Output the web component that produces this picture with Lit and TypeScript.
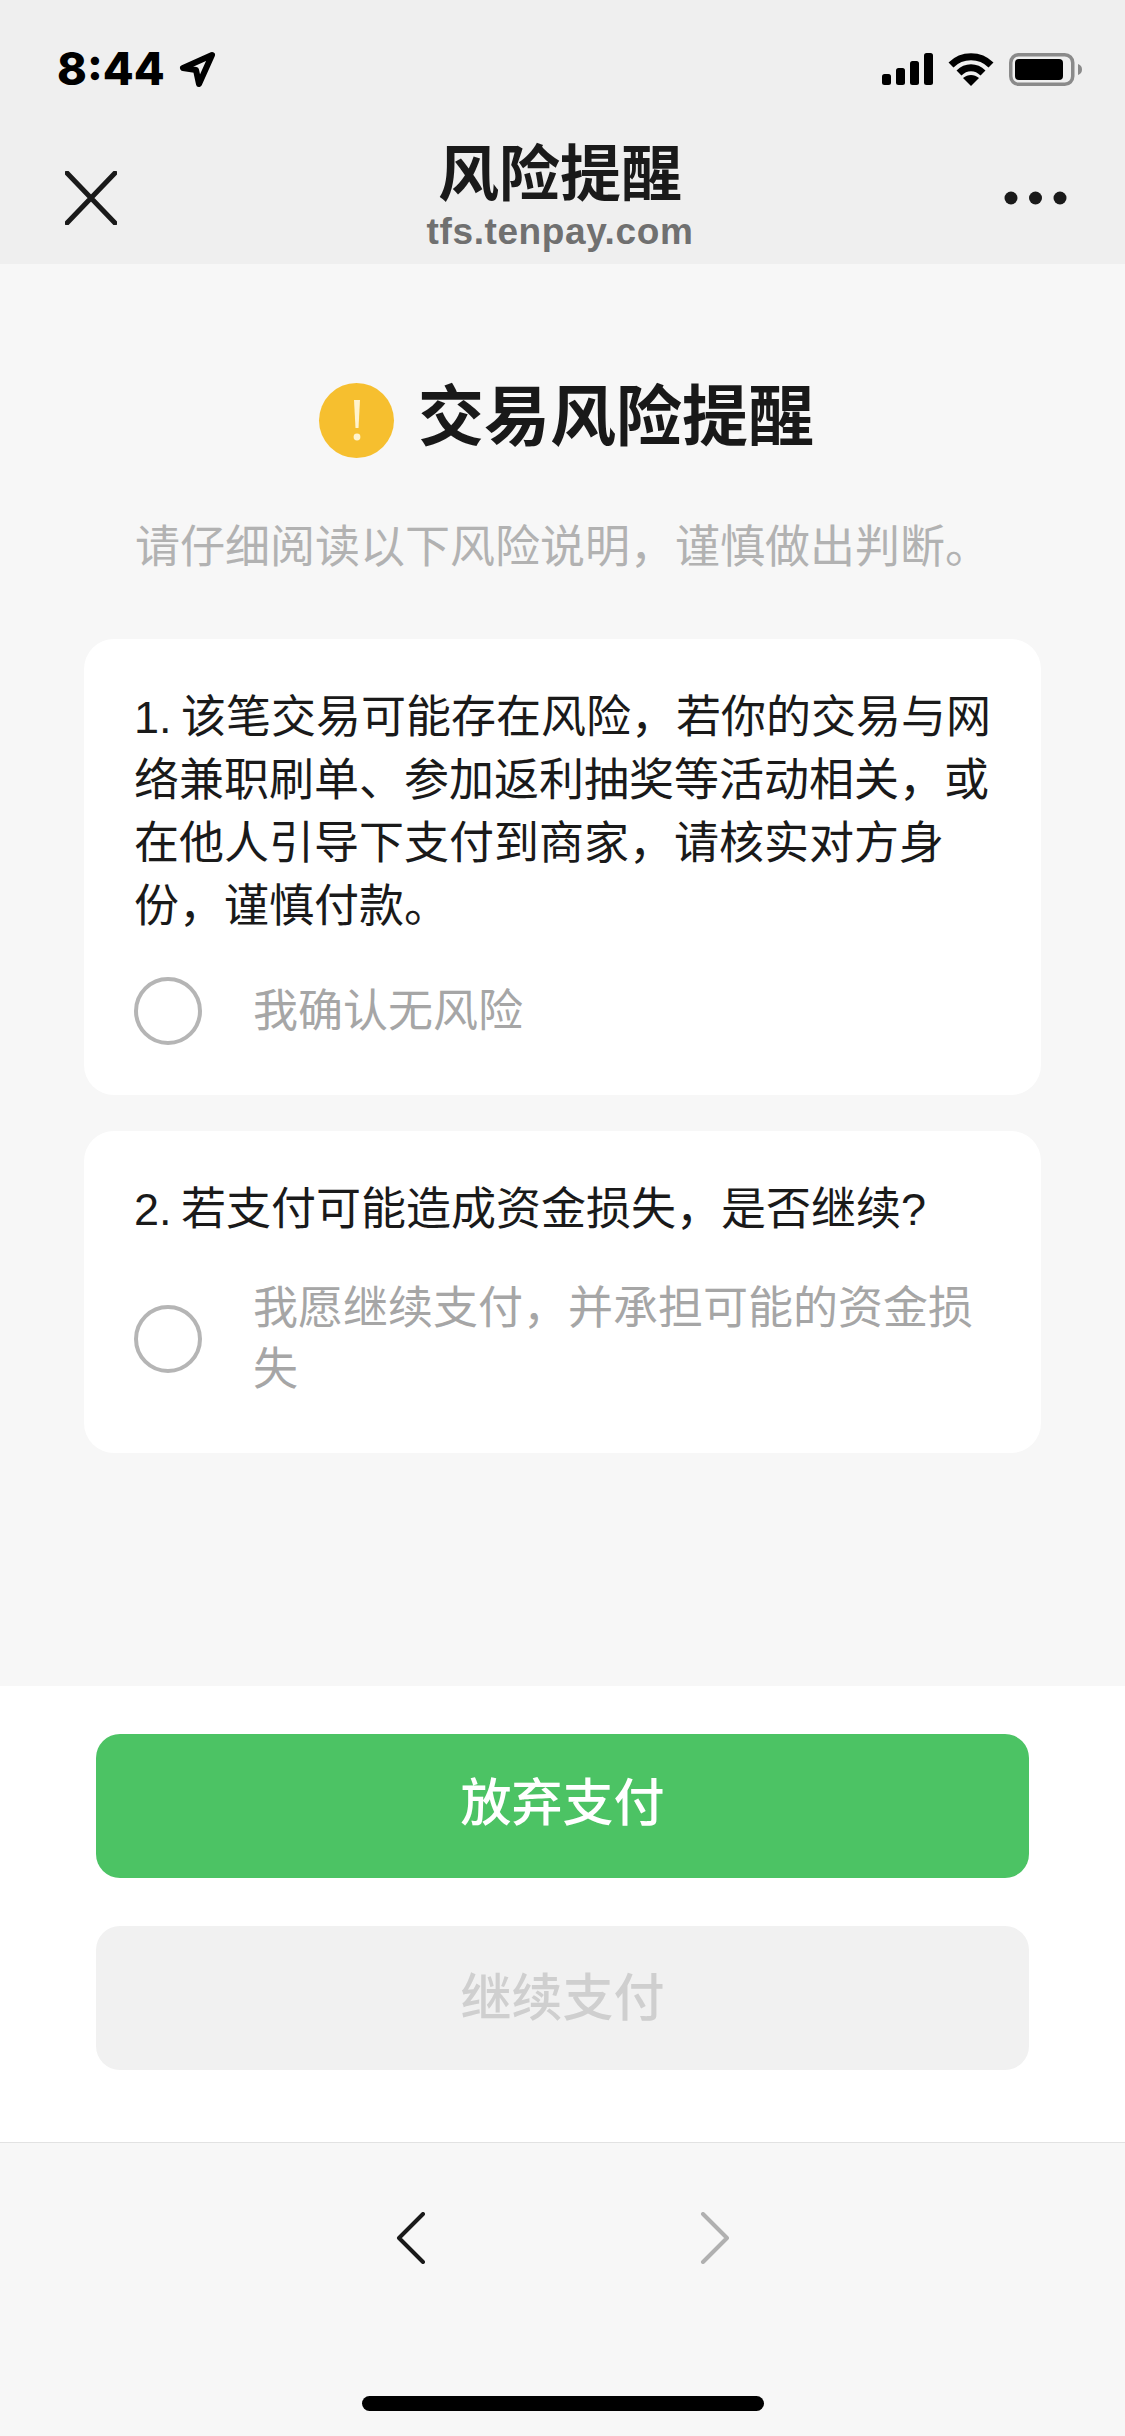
import { LitElement, html, css } from 'lit';
import { customElement } from 'lit/decorators.js';

@customElement('app-root')
export class AppRoot extends LitElement {
  static styles = css`
    :host {
      display: block;
      width: 1125px;
      height: 2436px;
      font-family: "Liberation Sans", "Noto Sans CJK SC", sans-serif;
    }
    .page {
      height: 2436px;
      display: flex;
      flex-direction: column;
      background: #f7f7f7;
    }

    .top {
      height: 264px;
      background: #efefef;
      flex: none;
    }
    .status {
      height: 52px;
      padding: 43px 43px 0 57px;
      display: flex;
      justify-content: space-between;
      align-items: center;
    }
    .time {
      display: flex;
      align-items: center;
      gap: 14px;
      font-family: Inter, "Liberation Sans", sans-serif;
      font-size: 45px;
      line-height: 40px;
      font-weight: 800;
      color: #000;
    }
    .time svg { display: block; }
    .sys { display: flex; align-items: center; gap: 15px; }
    .sys svg { display: block; }
    .nav {
      height: 116px;
      margin-top: 51px;
      padding: 0 58px 0 65px;
      display: grid;
      grid-template-columns: 120px 1fr 120px;
      align-items: start;
    }
    .nav .close { margin-top: 25px; display: block; }
    .nav .more { margin-top: 45px; justify-self: end; display: block; }
    .heading { text-align: center; padding-right: 12px; margin-top: -6px; }
    .heading .name {
      font-size: 61px;
      line-height: 70px;
      font-weight: 700;
      color: #1a1a1a;
    }
    .heading .host {
      margin-top: 2px;
      font-size: 37px;
      line-height: 40px;
      font-weight: 700;
      color: #707070;
      letter-spacing: 0.6px;
    }

    .main {
      flex: 1;
      padding: 0 84px;
    }
    .title {
      margin-top: 114px;
      display: flex;
      justify-content: center;
      align-items: center;
      gap: 24px;
      height: 84px;
      padding-left: 8px;
    }
    .title .badge {
      width: 75px;
      height: 75px;
      border-radius: 50%;
      background: #f6bf2f;
      display: flex;
      align-items: center;
      justify-content: center;
    }
    .title h1 {
      margin: -6px 0 0;
      font-size: 66px;
      line-height: 84px;
      font-weight: 700;
      color: #191919;
    }
    .intro {
      margin: 54px 0 59px;
      text-align: center;
      font-size: 45px;
      line-height: 64px;
      color: #b2b2b2;
    }
    .card {
      background: #fff;
      border-radius: 30px;
      padding: 47px 44px 0 50px;
      box-sizing: border-box;
      height: 456px;
    }
    .card.second { height: 322px; margin-top: 36px; }
    .question {
      margin: 0;
      font-size: 45px;
      line-height: 63px;
      word-spacing: -3px;
      color: #1a1a1a;
    }
    .option {
      display: flex;
      align-items: center;
      gap: 51px;
      margin-top: 39px;
    }
    .second .option { margin-top: 37px; }
    .radio {
      flex: none;
      width: 68px;
      height: 68px;
      box-sizing: border-box;
      border: 4px solid #b5b5b5;
      border-radius: 50%;
    }
    .option span {
      font-size: 45px;
      line-height: 61px;
      color: #a6a6a6;
    }

    .actions {
      flex: none;
      height: 456px;
      box-sizing: border-box;
      background: #fff;
      padding: 48px 96px 0;
      display: flex;
      flex-direction: column;
      gap: 48px;
    }
    .btn {
      height: 144px;
      box-sizing: border-box;
      padding-bottom: 8px;
      border-radius: 24px;
      display: flex;
      align-items: center;
      justify-content: center;
      font-size: 51px;
      font-weight: 500;
    }
    .btn.primary { background: #4cc364; color: #fff; padding-bottom: 14px; }
    .btn.disabled { background: #f1f1f1; color: #cfcfcf; }

    .toolbar {
      flex: none;
      height: 294px;
      box-sizing: border-box;
      border-top: 1px solid #e2e2e2;
      padding-top: 69px;
      display: flex;
      flex-direction: column;
      align-items: center;
    }
    .arrows { display: flex; gap: 274px; }
    .arrows svg { display: block; }
    .home {
      margin-top: 132px;
      width: 402px;
      height: 15px;
      border-radius: 8px;
      background: #000;
    }
  `;

  render() {
    return html`
      <div class="page">
        <div class="top">
          <div class="status">
            <div class="time">
              8:44
              <svg width="38" height="38" viewBox="0 0 38 38" fill="none" stroke="#000" stroke-width="6" stroke-linejoin="round">
                <path d="M33 5 L4 18 L17 20 L20 34 Z" />
              </svg>
            </div>
            <div class="sys">
              <svg width="51" height="32" viewBox="0 0 51 32" fill="#000">
                <rect x="0" y="21" width="9" height="11" rx="2.5" />
                <rect x="14" y="15" width="9" height="17" rx="2.5" />
                <rect x="28" y="8" width="9" height="24" rx="2.5" />
                <rect x="42" y="0" width="9" height="32" rx="2.5" />
              </svg>
              <svg width="46" height="33" viewBox="0 0 46 33" fill="none" stroke="#000" stroke-width="7">
                <path d="M3 12 C14 1 32 1 43 12" />
                <path d="M11 20 C18 13 28 13 35 20" />
                <path d="M23 33 L15 25 C20 21 26 21 31 25 Z" fill="#000" stroke="none" />
              </svg>
              <svg width="73" height="33" viewBox="0 0 73 33">
                <rect x="1.75" y="1.75" width="62" height="29.5" rx="8" fill="none" stroke="#8a8a8a" stroke-width="3.5" />
                <rect x="6" y="6" width="48" height="21" rx="4" fill="#000" />
                <path d="M69 11 C72 12 73 14 73 16.5 C73 19 72 21 69 22 Z" fill="#8a8a8a" />
              </svg>
            </div>
          </div>
          <div class="nav">
            <svg class="close" width="52" height="54" viewBox="0 0 52 54" fill="none" stroke="#1a1a1a" stroke-width="5" stroke-linecap="round">
              <path d="M2 2 L50 52 M50 2 L2 52" />
            </svg>
            <div class="heading">
              <div class="name">风险提醒</div>
              <div class="host">tfs.tenpay.com</div>
            </div>
            <svg class="more" width="63" height="14" viewBox="0 0 63 14" fill="#1a1a1a">
              <circle cx="7" cy="7" r="6.5" />
              <circle cx="31.5" cy="7" r="6.5" />
              <circle cx="56" cy="7" r="6.5" />
            </svg>
          </div>
        </div>

        <div class="main">
          <div class="title">
            <div class="badge">
              <svg width="8" height="42" viewBox="0 0 8 42" fill="#fff3cd">
                <path d="M1 1 H7 L5.5 29 H2.5 Z" />
                <circle cx="4" cy="38" r="3.4" />
              </svg>
            </div>
            <h1>交易风险提醒</h1>
          </div>
          <p class="intro">请仔细阅读以下风险说明，谨慎做出判断。</p>

          <div class="card">
            <p class="question">1. 该笔交易可能存在风险，若你的交易与网络兼职刷单、参加返利抽奖等活动相关，或在他人引导下支付到商家，请核实对方身份，谨慎付款。</p>
            <div class="option">
              <div class="radio"></div>
              <span>我确认无风险</span>
            </div>
          </div>

          <div class="card second">
            <p class="question">2. 若支付可能造成资金损失，是否继续?</p>
            <div class="option">
              <div class="radio"></div>
              <span>我愿继续支付，并承担可能的资金损失</span>
            </div>
          </div>
        </div>

        <div class="actions">
          <div class="btn primary">放弃支付</div>
          <div class="btn disabled">继续支付</div>
        </div>

        <div class="toolbar">
          <div class="arrows">
            <svg width="30" height="52" viewBox="0 0 30 52" fill="none" stroke="#1a1a1a" stroke-width="4" stroke-linecap="round" stroke-linejoin="round">
              <path d="M27 2 L3 26 L27 50" />
            </svg>
            <svg width="30" height="52" viewBox="0 0 30 52" fill="none" stroke="#b0b0b0" stroke-width="4" stroke-linecap="round" stroke-linejoin="round">
              <path d="M3 2 L27 26 L3 50" />
            </svg>
          </div>
          <div class="home"></div>
        </div>
      </div>
    `;
  }
}
